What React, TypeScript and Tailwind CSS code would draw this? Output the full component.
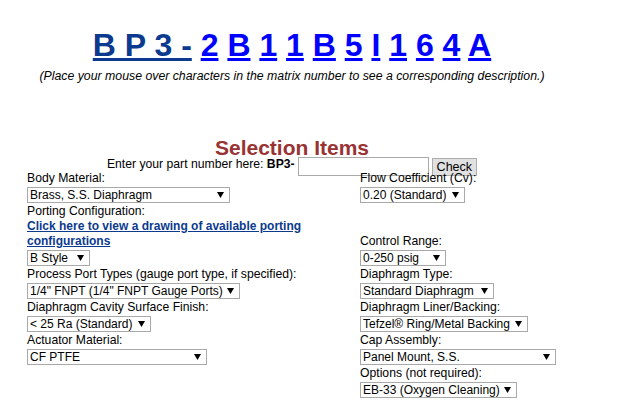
const font = { fontFamily: '"Liberation Sans", Arial, sans-serif' };

const matrix = ['2', 'B', '1', '1', 'B', '5', 'I', '1', '6', '4', 'A'];

function Sel({ w, text }: { w: string; text: string }) {
  return (
    <div className={`${w} h-[16px] my-[1px] border border-[#a9a9a9] bg-white flex items-center justify-between pl-[2px] pr-[5px] text-[12px] leading-[14px] text-black whitespace-nowrap`}>
      <span>{text}</span>
      <svg width="7" height="6" viewBox="0 0 7 6" className="shrink-0 ml-[4px]">
        <polygon points="0,0 7,0 3.5,6" fill="#000" />
      </svg>
    </div>
  );
}

function Label({ children }: { children: React.ReactNode }) {
  return <div className="text-[12.2px] leading-[15px] text-black whitespace-nowrap">{children}</div>;
}

export default function App() {
  return (
    <div className="bg-white w-[627px] h-[415px] overflow-hidden" style={font}>
      <div className="w-[584px] pt-[29px]">
        <div className="text-center text-[32px] leading-[32px] font-bold whitespace-nowrap">
          <a href="#" className="underline text-[#0b3a8e]">B P 3 -</a>{' '}
          {matrix.map((c, i) => (
            <span key={i}>
              <a href="#" className="underline text-[#0000ff]">{c}</a>
              {i < matrix.length - 1 ? ' ' : ''}
            </span>
          ))}
        </div>
        <p className="mt-[8px] text-center text-[12.3px] leading-[14px] italic text-black whitespace-nowrap">
          (Place your mouse over characters in the matrix number to see a corresponding description.)
        </p>

        <h2 className="mt-[55px] text-center text-[21px] leading-[19px] font-bold text-[#993333]">
          Selection Items
        </h2>

        <div className="h-[14px] flex justify-center items-start text-[12.2px] leading-[15px] text-black">
          <span className="whitespace-nowrap mr-[3px]">
            Enter your part number here: <b>BP3-</b>
          </span>
          <input className="w-[131px] h-[19px] border border-[#a9a9a9] bg-white outline-none" />
          <button className="ml-[3px] mt-[1px] h-[18px] px-[4px] border border-[#adadad] bg-[#e1e1e1] text-[12.5px] leading-[14px] text-black">
            Check
          </button>
        </div>

        <div className="flex">
          <div className="pl-[27px] w-[360px]">
            <Label>Body Material:</Label>
            <Sel w="w-[203px]" text="Brass, S.S. Diaphragm" />
            <Label>Porting Configuration:</Label>
            <a href="#" className="block w-[280px] text-[12px] leading-[15px] font-bold underline text-[#0b3a8e]">
              Click here to view a drawing of available porting configurations
            </a>
            <Sel w="w-[63px]" text="B Style" />
            <Label>Process Port Types (gauge port type, if specified):</Label>
            <Sel w="w-[213px]" text={'1/4" FNPT (1/4" FNPT Gauge Ports)'} />
            <Label>Diaphragm Cavity Surface Finish:</Label>
            <Sel w="w-[124px]" text="< 25 Ra (Standard)" />
            <Label>Actuator Material:</Label>
            <Sel w="w-[180px]" text="CF PTFE" />
          </div>
          <div>
            <Label>Flow Coefficient (Cv):</Label>
            <Sel w="w-[105px]" text="0.20 (Standard)" />
            <div className="h-[30px]" />
            <Label>Control Range:</Label>
            <Sel w="w-[86px]" text="0-250 psig" />
            <Label>Diaphragm Type:</Label>
            <Sel w="w-[134px]" text="Standard Diaphragm" />
            <Label>Diaphragm Liner/Backing:</Label>
            <Sel w="w-[168px]" text="Tefzel® Ring/Metal Backing" />
            <Label>Cap Assembly:</Label>
            <Sel w="w-[196px]" text="Panel Mount, S.S." />
            <Label>Options (not required):</Label>
            <Sel w="w-[157px]" text="EB-33 (Oxygen Cleaning)" />
          </div>
        </div>
      </div>
    </div>
  );
}
